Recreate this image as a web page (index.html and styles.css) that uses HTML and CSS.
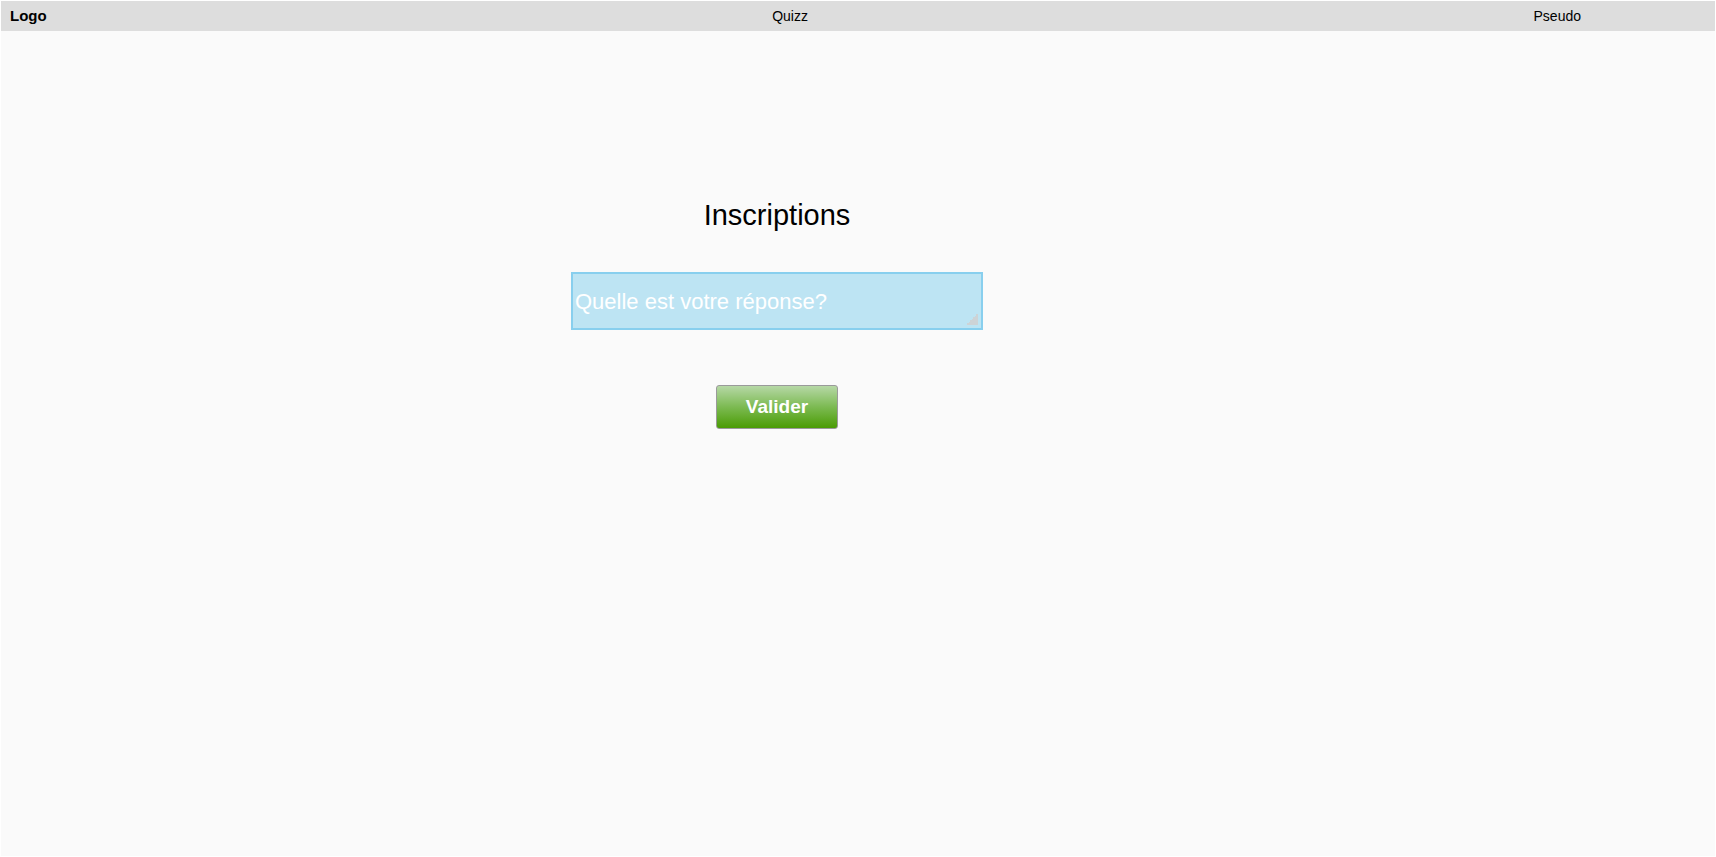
FILE: index.html
```html
<!DOCTYPE html>
<html lang="fr">
<head>
<meta charset="utf-8">
<title>Quizz - Inscriptions</title>
<link rel="stylesheet" href="styles.css">
</head>
<body>
<header class="topbar">
  <span class="logo">Logo</span>
  <span class="nav-item">Quizz</span>
  <span class="nav-item">Pseudo</span>
</header>
<main class="content">
  <h1 class="title">Inscriptions</h1>
  <textarea class="answer" placeholder="Quelle est votre réponse?"></textarea>
  <button class="submit" type="button">Valider</button>
</main>
</body>
</html>
```

FILE: styles.css
```css
html {
  background: #ffffff;
}
body {
  margin: 1px;
  min-height: calc(100vh - 2px);
  background: #fafafa;
  font-family: "Liberation Sans", Arial, sans-serif;
  color: #000;
  display: flex;
  flex-direction: column;
}
.topbar {
  height: 30px;
  box-sizing: border-box;
  background: #dddddd;
  display: flex;
  align-items: center;
  justify-content: space-between;
  padding: 0 134px 0 9px;
  font-size: 14px;
  line-height: 16px;
}
.logo {
  font-weight: bold;
  font-size: 15px;
}
.content {
  display: flex;
  flex-direction: column;
  align-items: center;
  padding: 167.5px 162px 0 0;
}
.title {
  margin: 0;
  font-size: 29px;
  line-height: 33px;
  font-weight: normal;
}
.answer {
  margin: 40px 0 0 0;
  width: 412px;
  height: 58px;
  box-sizing: border-box;
  padding: 15px 2px 0 2px;
  border: 2px solid #88cfee;
  background: #bde4f3;
  font-family: "Liberation Sans", Arial, sans-serif;
  font-size: 22px;
  color: #ffffff;
  outline: none;
}
.answer::placeholder {
  color: #ffffff;
  opacity: 1;
}
.answer::-webkit-resizer {
  background: linear-gradient(135deg, transparent 50%, #cdd3d6 50%) left top / 12px 12px no-repeat;
}
.submit {
  margin-top: 55px;
  width: 122px;
  height: 44px;
  box-sizing: border-box;
  border: 1px solid #9a9a9a;
  border-radius: 3px;
  background: linear-gradient(to bottom, #b6d8a6 0%, #7cba52 50%, #4a9c04 100%);
  color: #ffffff;
  font-family: "Liberation Sans", Arial, sans-serif;
  font-weight: bold;
  font-size: 19px;
  padding: 0;
}
```
